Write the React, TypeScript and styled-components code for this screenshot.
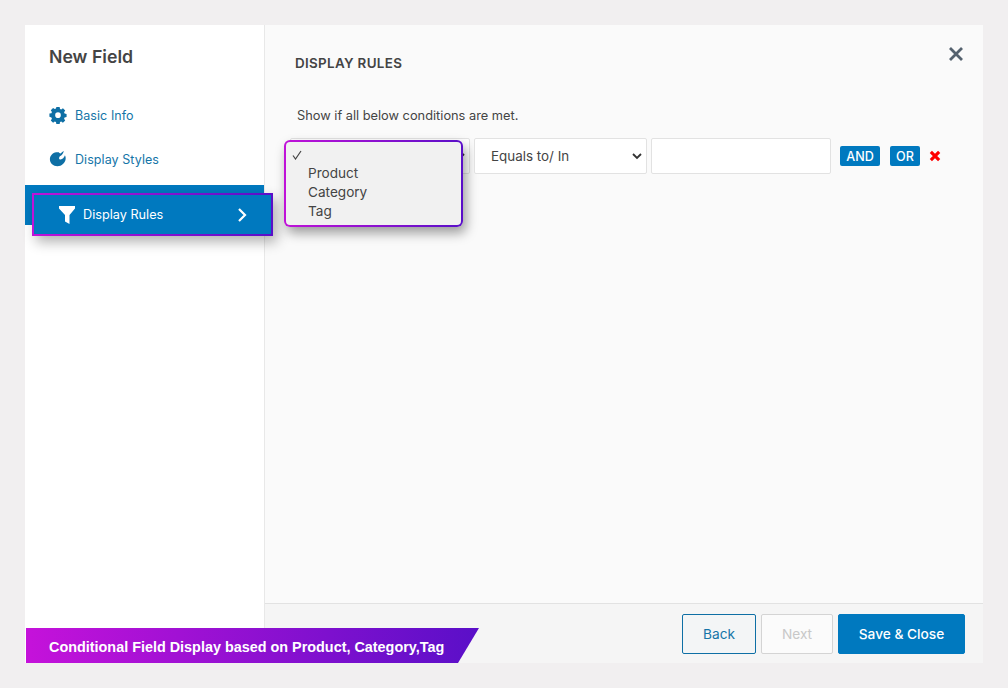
import React from "react";
import styled, { createGlobalStyle } from "styled-components";

const Global = createGlobalStyle`
  html, body { margin: 0; padding: 0; }
  body { width: 1008px; height: 688px; overflow: hidden; background: #f1eff0; font-family: Inter, "Liberation Sans", sans-serif; color: #444; }
  * { box-sizing: border-box; }
`;

const Page = styled.div`
  width: 1008px;
  height: 688px;
  padding: 25px;
`;
const Modal = styled.div`
  position: relative;
  width: 958px;
  height: 638px;
  display: grid;
  grid-template-columns: 240px 1fr;
  background: #fafafa;
`;
const Sidebar = styled.aside`
  background: #fff;
  border-right: 1px solid #e8e8e8;
  display: flex;
  flex-direction: column;
`;
const Title = styled.h1`
  margin: 0;
  padding: 21px 0 0 24px;
  height: 68px;
  font-size: 17.7px;
  line-height: 22px;
  font-weight: 600;
  color: #444;
`;
const NavItem = styled.a`
  height: 44px;
  padding-left: 24px;
  display: flex;
  align-items: center;
  gap: 8px;
  font-size: 12.5px;
  font-weight: 400;
  color: #1575a8;
  letter-spacing: 0.07px;
  svg { width: 18px; height: 18px; fill: #0e6fa5; flex: none; }
`;
const ActiveItem = styled.div`
  position: relative;
  margin-top: 4px;
  height: 40px;
  background: #0079bf;
`;
const Highlight = styled.div`
  position: absolute;
  left: 7px;
  top: 8px;
  width: 241px;
  height: 43px;
  padding: 2px;
  background: linear-gradient(90deg, #c012d8, #5a0fc8);
  box-shadow: 4px 6px 12px rgba(0, 0, 0, 0.3);
`;
const HighlightInner = styled.div`
  height: 100%;
  background: #0079bf;
  display: flex;
  align-items: center;
  padding-left: 25px;
  color: #fff;
  font-size: 12.7px;
  font-weight: 400;
  svg.funnel { width: 16px; height: 18px; fill: #fff; flex: none; margin-right: 8px; }
  svg.chev { margin-left: 74px; width: 10px; height: 14px; stroke: #fff; fill: none; flex: none; }
`;
const Main = styled.main`
  display: flex;
  flex-direction: column;
  min-width: 0;
`;
const Body = styled.div`
  flex: 1;
  position: relative;
  padding: 30px 0 0 30px;
`;
const Close = styled.button`
  position: absolute;
  top: 21px;
  right: 19px;
  width: 16px;
  height: 16px;
  padding: 0;
  border: 0;
  background: none;
  svg { display: block; stroke: #54616e; stroke-width: 2.8; width: 16px; height: 16px; fill: none; }
`;
const Heading = styled.h2`
  margin: 0;
  font-size: 13.4px;
  line-height: 16px;
  font-weight: 600;
  color: #444;
  letter-spacing: 0.33px;
`;
const Note = styled.p`
  margin: 37px 0 0 2px;
  font-size: 12.8px;
  line-height: 16px;
  color: #444;
`;
const Rule = styled.div`
  display: flex;
  align-items: center;
  margin: 14px 0 0 -5px;
`;
const SelectBox = styled.div<{ $w: number }>`
  position: relative;
  width: ${(p) => p.$w}px;
  height: 36px;
  margin-right: 4px;
  background: #fff;
  border: 1px solid #e2e2e2;
  border-radius: 2px;
  display: flex;
  align-items: center;
  padding-left: 16px;
  font-size: 13.4px;
  color: #444;
  > svg { position: absolute; right: 4px; top: 14px; width: 10px; height: 7px; stroke: #333; stroke-width: 1.8; fill: none; }
`;
const TextBox = styled.div`
  width: 180px;
  height: 36px;
  background: #fff;
  border: 1px solid #e2e2e2;
  border-radius: 2px;
`;
const Tag = styled.button<{ $w: number; $ml: number }>`
  width: ${(p) => p.$w}px;
  margin-left: ${(p) => p.$ml}px;
  height: 20px;
  padding: 0;
  border: 0;
  border-radius: 2px;
  background: #0079bf;
  color: #fff;
  font: 500 12.6px Inter, sans-serif;
`;
const Remove = styled.span`
  margin-left: 9px;
  display: flex;
  svg { width: 12px; height: 12px; stroke: #f00; stroke-width: 3.4; fill: none; }
`;
const DropFrame = styled.div`
  position: absolute;
  left: -7px;
  top: 1px;
  width: 179px;
  height: 87px;
  padding: 2px;
  border-radius: 6px;
  background: linear-gradient(90deg, #c012d8, #5a0fc8);
  box-shadow: 3px 6px 12px rgba(0, 0, 0, 0.38);
`;
const DropInner = styled.ul`
  margin: 0;
  height: 100%;
  list-style: none;
  padding: 3px 0 0 22px;
  border-radius: 4px;
  background: #f1f1f1;
  position: relative;
  font-size: 13.6px;
  line-height: 19px;
  color: #444;
`;
const Check = styled.li`
  height: 19px;
  margin-left: -16px;
  display: flex;
  align-items: center;
  svg { width: 10px; height: 10px; stroke: #444; stroke-width: 1.2; fill: none; }
`;
const Footer = styled.footer`
  height: 60px;
  background: #f5f5f5;
  border-top: 1px solid #e2e2e2;
  display: flex;
  justify-content: flex-end;
  align-items: flex-start;
  padding: 10px 18px 0 0;
  gap: 5px;
`;
const Btn = styled.button<{ $kind: "back" | "next" | "save"; $w: number }>`
  width: ${(p) => p.$w}px;
  height: 40px;
  padding: 0 0 ${(p) => (p.$kind === "save" ? 1 : 0)}px;
  border-radius: 2px;
  font: ${(p) => (p.$kind === "save" ? 500 : 400)} 13.7px Inter, sans-serif;
  border: 1px solid ${(p) => (p.$kind === "back" ? "#0e6fa5" : p.$kind === "next" ? "#d4d4d4" : "#0079bf")};
  background: ${(p) => (p.$kind === "back" ? "#f3f5f6" : p.$kind === "next" ? "#fbfbfb" : "#0079bf")};
  color: ${(p) => (p.$kind === "back" ? "#1575a8" : p.$kind === "next" ? "#c8c8c8" : "#fff")};
`;
const Banner = styled.div`
  position: absolute;
  left: 1px;
  bottom: 0;
  width: 453px;
  height: 35px;
  padding: 2px 0 0 23px;
  display: flex;
  align-items: center;
  background: linear-gradient(90deg, #c512da, #5a0fc8);
  clip-path: polygon(0 0, 100% 0, 432px 100%, 0 100%);
  color: #fff;
  font-family: "Liberation Sans", Arial, sans-serif;
  font-weight: 700;
  font-size: 14.4px;
  white-space: pre;
`;

export default function App() {
  return (
    <Page>
      <Global />
      <Modal>
        <Sidebar>
          <Title>New Field</Title>
          <NavItem>
            <svg viewBox="0 0 20 20">
              <path
                fillRule="evenodd"
                d="M8 .8h4l.5 2.500 1.500.6 2.100-1.400 2.800 2.800-1.400 2.100.6 1.500 2.500.5v4l-2.500.5-.6 1.500 1.400 2.100-2.800 2.800-2.100-1.400-1.500.6-.5 2.500H8l-.5-2.500-1.500-.6-2.100 1.400-2.800-2.800 1.400-2.100-.6-1.500L-.6 13V9l2.500-.5.6-1.500-1.400-2.100 2.800-2.800 2.100 1.400 1.500-.6zM10 7.500a3.500 3.500 0 1 0 0 7 3.500 3.500 0 0 0 0-7z"
                transform="translate(1 .3) scale(.9)"
              />
            </svg>
            Basic Info
          </NavItem>
          <NavItem>
            <svg viewBox="0 0 20 20">
              <path d="M11 2.600c-.9-.2-1.900-.3-2.900-.1C3.900 3.100 1 6.500 1 10.300c0 4.300 3.700 7.700 8.400 7.700 4.600 0 8.600-3.600 9.100-8 .2-1.500-.1-3-.8-4.300-.5 1.700-1.500 3.100-2.900 4.100-1.100.8-2.300 1.100-3.100.5-.8-.7-.6-2 .2-3.100.8-1.100 1.900-2.300 2.500-3.500-1 .3-2 .4-3.400-.9zM16.500 1c-2 1-3.700 2.600-4.700 4.500-.3.700 0 1.300.8 1.200 1.800-1 3.400-3.300 3.900-5.700z" />
            </svg>
            Display Styles
          </NavItem>
          <ActiveItem>
            <Highlight>
              <HighlightInner>
                <svg className="funnel" viewBox="0 0 16 18">
                  <path d="M0 0h16v2.500L10.500 9v9L6 15.500V9L0 2.500z" />
                </svg>
                Display Rules
                <svg className="chev" viewBox="0 0 10 14" strokeWidth="2.2">
                  <path d="M2 1l6 6-6 6" />
                </svg>
              </HighlightInner>
            </Highlight>
          </ActiveItem>
        </Sidebar>
        <Main>
          <Body>
            <Close aria-label="Close">
              <svg viewBox="0 0 16 16">
                <path d="M2 2l12 12M14 2L2 14" />
              </svg>
            </Close>
            <Heading>DISPLAY RULES</Heading>
            <Note>Show if all below conditions are met.</Note>
            <Rule>
              <SelectBox $w={180}>
                <svg viewBox="0 0 10 7">
                  <path d="M1 1l4 4 4-4" />
                </svg>
                <DropFrame>
                  <DropInner>
                    <Check>
                      <svg viewBox="0 0 10 10">
                        <path d="M1 5.500L3.500 9 9 1" />
                      </svg>
                    </Check>
                    <li>Product</li>
                    <li>Category</li>
                    <li>Tag</li>
                  </DropInner>
                </DropFrame>
              </SelectBox>
              <SelectBox $w={173}>
                Equals to/ In
                <svg viewBox="0 0 10 7">
                  <path d="M1 1l4 4 4-4" />
                </svg>
              </SelectBox>
              <TextBox />
              <Tag $w={40} $ml={9}>AND</Tag>
              <Tag $w={30} $ml={10}>OR</Tag>
              <Remove>
                <svg viewBox="0 0 13 13">
                  <path d="M2 2l9 9M11 2l-9 9" />
                </svg>
              </Remove>
            </Rule>
          </Body>
          <Footer>
            <Btn $kind="back" $w={74}>Back</Btn>
            <Btn $kind="next" $w={72}>Next</Btn>
            <Btn $kind="save" $w={127}>Save &amp; Close</Btn>
          </Footer>
        </Main>
        <Banner>Conditional Field Display based on Product, Category,Tag</Banner>
      </Modal>
    </Page>
  );
}
